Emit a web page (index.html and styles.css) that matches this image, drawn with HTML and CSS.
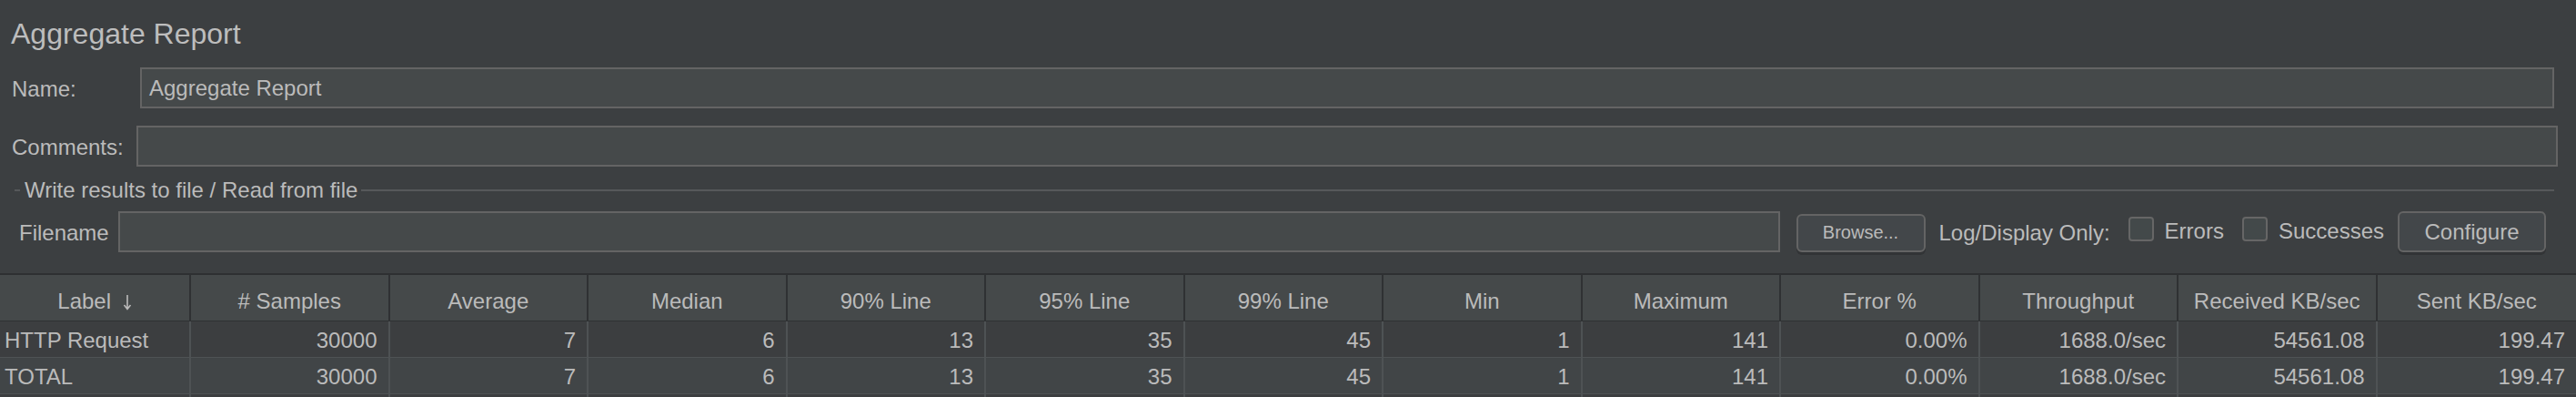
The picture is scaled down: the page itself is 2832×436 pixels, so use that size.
FILE: index.html
```html
<!DOCTYPE html>
<html>
<head>
<meta charset="utf-8">
<title>Aggregate Report</title>
<link rel="stylesheet" href="styles.css">
</head>
<body>
<div class="panel">
  <div class="title">Aggregate Report</div>
  <div class="row name-row">
    <span class="lbl name-lbl">Name:</span>
    <div class="field">Aggregate Report</div>
  </div>
  <div class="row comments-row">
    <span class="lbl comments-lbl">Comments:</span>
    <div class="field"></div>
  </div>
  <div class="group">
    <div class="legend">
      <span class="dash"></span>
      <span class="legend-text">Write results to file / Read from file</span>
      <span class="line"></span>
    </div>
    <div class="file-row">
      <span class="lbl file-lbl">Filename</span>
      <div class="field file-field"></div>
      <button class="btn browse">Browse...</button>
      <span class="lbl only-lbl">Log/Display Only:</span>
      <span class="check"></span>
      <span class="lbl check-lbl">Errors</span>
      <span class="check check-2"></span>
      <span class="lbl check-lbl">Successes</span>
      <button class="btn configure">Configure</button>
    </div>
  </div>
</div>
<div class="table">
  <div class="thead">
    <div class="th">Label <svg class="sort" width="10" height="18" viewBox="0 0 10 18"><path d="M5 1 V16 M1.5 12 L5 16.5 L8.5 12" fill="none" stroke="#bbbbbb" stroke-width="1.6"/></svg></div>
    <div class="th"># Samples</div>
    <div class="th">Average</div>
    <div class="th">Median</div>
    <div class="th">90% Line</div>
    <div class="th">95% Line</div>
    <div class="th">99% Line</div>
    <div class="th">Min</div>
    <div class="th">Maximum</div>
    <div class="th">Error %</div>
    <div class="th">Throughput</div>
    <div class="th">Received KB/sec</div>
    <div class="th">Sent KB/sec</div>
  </div>
  <div class="tr">
    <div class="td first">HTTP Request</div>
    <div class="td">30000</div>
    <div class="td">7</div>
    <div class="td">6</div>
    <div class="td">13</div>
    <div class="td">35</div>
    <div class="td">45</div>
    <div class="td">1</div>
    <div class="td">141</div>
    <div class="td">0.00%</div>
    <div class="td">1688.0/sec</div>
    <div class="td">54561.08</div>
    <div class="td">199.47</div>
  </div>
  <div class="tr alt">
    <div class="td first">TOTAL</div>
    <div class="td">30000</div>
    <div class="td">7</div>
    <div class="td">6</div>
    <div class="td">13</div>
    <div class="td">35</div>
    <div class="td">45</div>
    <div class="td">1</div>
    <div class="td">141</div>
    <div class="td">0.00%</div>
    <div class="td">1688.0/sec</div>
    <div class="td">54561.08</div>
    <div class="td">199.47</div>
  </div>
  <div class="tr filler">
    <div class="td first"></div>
    <div class="td"></div>
    <div class="td"></div>
    <div class="td"></div>
    <div class="td"></div>
    <div class="td"></div>
    <div class="td"></div>
    <div class="td"></div>
    <div class="td"></div>
    <div class="td"></div>
    <div class="td"></div>
    <div class="td"></div>
    <div class="td"></div>
  </div>
</div>
</body>
</html>
```
FILE: styles.css
```css
html, body {
  margin: 0;
  padding: 0;
  background: #3c3f41;
  overflow: hidden;
}
body {
  width: 2832px;
  height: 436px;
  font-family: "Liberation Sans", Arial, sans-serif;
  font-size: 24px;
  color: #bbbbbb;
}
.panel {
  display: flex;
  flex-direction: column;
}
.title {
  margin-top: 17px;
  height: 40px;
  line-height: 40px;
  font-size: 32px;
  padding-left: 12px;
  color: #bdbdbd;
}
.row {
  display: flex;
  align-items: center;
  height: 45px;
  padding-left: 13px;
}
.name-row {
  margin-top: 17px;
  padding-right: 24px;
}
.comments-row {
  margin-top: 19px;
  padding-right: 20px;
}
.lbl {
  white-space: nowrap;
  line-height: 28px;
  padding-top: 2px;
}
.name-lbl {
  width: 141px;
  flex: none;
}
.comments-lbl {
  width: 137px;
  flex: none;
}
.field {
  flex: 1;
  height: 45px;
  box-sizing: border-box;
  background: #45494a;
  border: 2px solid #646464;
  line-height: 41px;
  padding-left: 8px;
  color: #bbbbbb;
}
.group {
  margin-top: 12px;
  padding-right: 24px;
}
.legend {
  display: flex;
  align-items: center;
  height: 28px;
  padding-left: 16px;
}
.dash {
  width: 6px;
  height: 2px;
  background: #56585a;
  flex: none;
}
.legend-text {
  line-height: 28px;
  padding: 0 4px 0 5px;
  white-space: nowrap;
}
.line {
  flex: 1;
  height: 2px;
  background: #56585a;
}
.file-row {
  margin-top: 9px;
  display: flex;
  align-items: center;
  height: 45px;
  padding-left: 21px;
  padding-right: 9px;
}
.file-lbl {
  margin-right: 10px;
}
.file-field {
  flex: 1;
}
.btn {
  box-sizing: border-box;
  font-family: "Liberation Sans", Arial, sans-serif;
  color: #bbbbbb;
  background: #43474a;
  border: 2px solid #646464;
  border-radius: 6px;
  box-shadow: 0 3px 0 #323436;
  padding: 0;
  flex: none;
}
.browse {
  width: 142px;
  height: 42px;
  font-size: 20px;
  margin-left: 18px;
  margin-top: 2px;
}
.only-lbl {
  margin-left: 15px;
}
.check {
  box-sizing: border-box;
  width: 28px;
  height: 27px;
  background: #43494a;
  border: 2px solid #666666;
  border-radius: 4px;
  margin-left: 20px;
  margin-bottom: 6px;
  flex: none;
}
.check-2 {
  margin-left: 20px;
}
.check-lbl {
  margin-left: 12px;
  margin-bottom: 4px;
}
.configure {
  width: 163px;
  height: 45px;
  font-size: 24px;
  margin-left: 15px;
}
.table {
  margin-top: 23px;
  border-top: 2px solid #2e3032;
}
.thead, .tr {
  display: grid;
  grid-template-columns: 210px repeat(12, 1fr);
}
.th {
  height: 51px;
  box-sizing: border-box;
  background: #45494a;
  border-right: 2px solid #2f3133;
  border-bottom: 1px solid #2f3133;
  text-align: center;
  padding-top: 8px;
  line-height: 42px;
  white-space: nowrap;
}
.th:last-child {
  border-right: none;
}
.sort {
  vertical-align: -2px;
  margin-left: 6px;
}
.td {
  height: 40px;
  box-sizing: border-box;
  background: #3c3e40;
  border-right: 2px solid #4e5254;
  border-bottom: 1px solid #4e5254;
  text-align: right;
  padding-right: 12px;
  padding-top: 2px;
  line-height: 37px;
  white-space: nowrap;
}
.td:last-child {
  border-right: none;
}
.td.first {
  text-align: left;
  padding-left: 5px;
  padding-right: 0;
}
.alt .td {
  background: #414547;
}
.filler .td {
  height: 20px;
}
```
